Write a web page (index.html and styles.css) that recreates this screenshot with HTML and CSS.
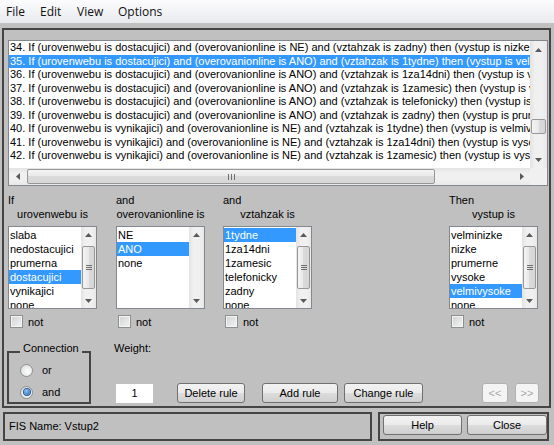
FILE: index.html
```html
<!DOCTYPE html>
<html>
<head>
<meta charset="utf-8">
<title>Rule Editor</title>
<link rel="stylesheet" href="styles.css">
</head>
<body>
<div class="win">
  <div class="menubar">
    <span>File</span><span>Edit</span><span>View</span><span>Options</span>
  </div>

  <div class="frame">
    <div class="rulebox">
      <div class="rules">
        <div class="rl">34. If (urovenwebu is dostacujici) and (overovanionline is NE) and (vztahzak is zadny) then (vystup is nizke) (1)</div>
        <div class="rl sel">35. If (urovenwebu is dostacujici) and (overovanionline is ANO) and (vztahzak is 1tydne) then (vystup is velmivysoke) (1)</div>
        <div class="rl">36. If (urovenwebu is dostacujici) and (overovanionline is ANO) and (vztahzak is 1za14dni) then (vystup is vysoke) (1)</div>
        <div class="rl">37. If (urovenwebu is dostacujici) and (overovanionline is ANO) and (vztahzak is 1zamesic) then (vystup is vysoke) (1)</div>
        <div class="rl">38. If (urovenwebu is dostacujici) and (overovanionline is ANO) and (vztahzak is telefonicky) then (vystup is prumerne) (1)</div>
        <div class="rl">39. If (urovenwebu is dostacujici) and (overovanionline is ANO) and (vztahzak is zadny) then (vystup is prumerne) (1)</div>
        <div class="rl">40. If (urovenwebu is vynikajici) and (overovanionline is NE) and (vztahzak is 1tydne) then (vystup is velmivysoke) (1)</div>
        <div class="rl">41. If (urovenwebu is vynikajici) and (overovanionline is NE) and (vztahzak is 1za14dni) then (vystup is vysoke) (1)</div>
        <div class="rl">42. If (urovenwebu is vynikajici) and (overovanionline is NE) and (vztahzak is 1zamesic) then (vystup is vysoke) (1)</div>
      </div>
      <div class="vsb big">
        <div class="arr"><svg width="7" height="4" viewBox="0 0 7 4"><polygon points="0,4 3.5,0 7,4" fill="#5a5a5a"/></svg></div>
        <div class="track"><div class="thumb bigthumb"></div></div>
        <div class="arr"><svg width="7" height="4" viewBox="0 0 7 4"><polygon points="0,0 7,0 3.5,4" fill="#5a5a5a"/></svg></div>
      </div>
      <div class="hsb">
        <div class="harr"><svg width="4" height="7" viewBox="0 0 4 7"><polygon points="4,0 4,7 0,3.5" fill="#5a5a5a"/></svg></div>
        <div class="htrack">
          <div class="hthumb">
            <svg width="7" height="6" viewBox="0 0 7 6"><path d="M0.5 0v6M3.5 0v6M6.5 0v6" stroke="#6e6e6e" stroke-width="1"/></svg>
          </div>
        </div>
        <div class="harr"><svg width="4" height="7" viewBox="0 0 4 7"><polygon points="0,0 4,3.5 0,7" fill="#5a5a5a"/></svg></div>
      </div>
      <div class="corner"></div>
    </div>

    <div class="cols">
      <div class="col">
        <div class="lab1">If</div>
        <div class="lab2">urovenwebu is</div>
        <div class="lb">
          <div class="items">
            <div>slaba</div><div>nedostacujici</div><div>prumerna</div><div class="sel">dostacujici</div><div>vynikajici</div><div>none</div>
          </div>
          <div class="vsb">
            <div class="arr sm"><svg width="7" height="4" viewBox="0 0 7 4"><polygon points="0,4 3.5,0 7,4" fill="#5a5a5a"/></svg></div>
            <div class="track"><div class="thumb smthumb"><svg width="6" height="5" viewBox="0 0 6 5"><path d="M0 0.5h6M0 2.5h6M0 4.5h6" stroke="#6e6e6e"/></svg></div></div>
            <div class="arr sm"><svg width="7" height="4" viewBox="0 0 7 4"><polygon points="0,0 7,0 3.5,4" fill="#5a5a5a"/></svg></div>
          </div>
        </div>
        <div class="chk"><span class="cbox"></span>not</div>
      </div>

      <div class="col c2">
        <div class="lab1">and</div>
        <div class="lab2">overovanionline is</div>
        <div class="lb">
          <div class="items">
            <div>NE</div><div class="sel">ANO</div><div>none</div>
          </div>
          <div class="vsb">
            <div class="arr sm"><svg width="7" height="4" viewBox="0 0 7 4"><polygon points="0,4 3.5,0 7,4" fill="#5a5a5a"/></svg></div>
            <div class="track"></div>
            <div class="arr sm"><svg width="7" height="4" viewBox="0 0 7 4"><polygon points="0,0 7,0 3.5,4" fill="#5a5a5a"/></svg></div>
          </div>
        </div>
        <div class="chk"><span class="cbox"></span>not</div>
      </div>

      <div class="col c3">
        <div class="lab1">and</div>
        <div class="lab2">vztahzak is</div>
        <div class="lb">
          <div class="items">
            <div class="sel">1tydne</div><div>1za14dni</div><div>1zamesic</div><div>telefonicky</div><div>zadny</div><div>none</div>
          </div>
          <div class="vsb">
            <div class="arr sm"><svg width="7" height="4" viewBox="0 0 7 4"><polygon points="0,4 3.5,0 7,4" fill="#5a5a5a"/></svg></div>
            <div class="track"><div class="thumb smthumb"><svg width="6" height="5" viewBox="0 0 6 5"><path d="M0 0.5h6M0 2.5h6M0 4.5h6" stroke="#6e6e6e"/></svg></div></div>
            <div class="arr sm"><svg width="7" height="4" viewBox="0 0 7 4"><polygon points="0,0 7,0 3.5,4" fill="#5a5a5a"/></svg></div>
          </div>
        </div>
        <div class="chk"><span class="cbox"></span>not</div>
      </div>

      <div class="col c4">
        <div class="lab1">Then</div>
        <div class="lab2">vystup is</div>
        <div class="lb">
          <div class="items">
            <div>velminizke</div><div>nizke</div><div>prumerne</div><div>vysoke</div><div class="sel">velmivysoke</div><div>none</div>
          </div>
          <div class="vsb">
            <div class="arr sm"><svg width="7" height="4" viewBox="0 0 7 4"><polygon points="0,4 3.5,0 7,4" fill="#5a5a5a"/></svg></div>
            <div class="track"><div class="thumb smthumb"><svg width="6" height="5" viewBox="0 0 6 5"><path d="M0 0.5h6M0 2.5h6M0 4.5h6" stroke="#6e6e6e"/></svg></div></div>
            <div class="arr sm"><svg width="7" height="4" viewBox="0 0 7 4"><polygon points="0,0 7,0 3.5,4" fill="#5a5a5a"/></svg></div>
          </div>
        </div>
        <div class="chk"><span class="cbox"></span>not</div>
      </div>
    </div>

    <div class="lower">
      <fieldset class="conn">
        <legend>Connection</legend>
        <div class="radios">
          <div class="radio"><span class="rbtn"></span>or</div>
          <div class="radio"><span class="rbtn on"></span>and</div>
        </div>
      </fieldset>
      <div class="weight">
        <div class="wlab">Weight:</div>
        <div class="winput">1</div>
      </div>
      <button class="btn b-del">Delete rule</button>
      <button class="btn b-add">Add rule</button>
      <button class="btn b-chg">Change rule</button>
      <button class="btn dis b-prev">&lt;&lt;</button>
      <button class="btn dis b-next">&gt;&gt;</button>
    </div>
  </div>

  <div class="bottom">
    <div class="fis">FIS Name: Vstup2</div>
    <div class="hc">
      <button class="btn b-help">Help</button>
      <button class="btn b-close">Close</button>
    </div>
  </div>
</div>
</body>
</html>
```

FILE: styles.css
```css
* { box-sizing: border-box; }

body {
  margin: 0;
  background: #c0c0c0;
  font-family: "Liberation Sans", Arial, sans-serif;
  font-size: 11px;
  color: #000;
}

.win {
  width: 554px;
  height: 445px;
  overflow: hidden;
  background: #c0c0c0;
}

/* menu */
.menubar {
  height: 23px;
  background: linear-gradient(#fcfcfd, #e8eaee);
  display: grid;
  grid-template-columns: 34px 37px 41px auto;
  align-items: center;
  padding-left: 6px;
  font-family: "Open Sans", "Liberation Sans", sans-serif;
  font-size: 12px;
  color: #111;
}

/* main frame */
.frame {
  margin: 5px 3px 0 2px;
  height: 380px;
  border: 2px solid #454545;
  padding: 10px 1px 0 4px;
}

.rulebox {
  width: 540px;
  height: 146px;
  border: 1px solid #828790;
  background: #fff;
  display: grid;
  grid-template-columns: 1fr 17px;
  grid-template-rows: 127px 17px;
}

.rules {
  overflow: hidden;
  white-space: nowrap;
  line-height: 13.5px;
}
.rl { padding-left: 1px; }
.rl.sel, .items .sel {
  background: #3399ff;
  color: #fff;
}

/* scrollbars */
.vsb {
  display: flex;
  flex-direction: column;
  background: linear-gradient(to right, #e3e3e3, #f0f0f0 30%, #f0f0f0 70%, #e8e8e8);
}
.arr {
  height: 17px;
  display: flex;
  align-items: center;
  justify-content: center;
  flex: none;
}
.arr.sm { height: 15px; }
.track { flex: 1; display: flex; flex-direction: column; }
.thumb {
  margin: 0 1px;
  border: 1px solid #979797;
  border-radius: 2px;
  background: linear-gradient(to right, #f4f4f4, #e8e8e8 50%, #dadada 50%, #d6d6d6);
  display: flex;
  align-items: center;
  justify-content: center;
}
.bigthumb { margin-top: 61px; height: 15px; }
.smthumb { margin-top: 4px; height: 43px; }

.hsb {
  display: flex;
  background: linear-gradient(#e3e3e3, #f0f0f0 30%, #f0f0f0 70%, #e8e8e8);
}
.harr {
  width: 17px;
  flex: none;
  display: flex;
  align-items: center;
  justify-content: center;
}
.htrack { flex: 1; display: flex; align-items: stretch; padding: 1px 0; }
.hthumb {
  margin-left: 1px;
  width: 408px;
  border: 1px solid #979797;
  border-radius: 2px;
  background: linear-gradient(#f4f4f4, #e8e8e8 50%, #dadada 50%, #d6d6d6);
  display: flex;
  align-items: center;
  justify-content: center;
}
.corner { background: #f0f0f0; }

/* antecedent columns */
.cols {
  display: flex;
  width: 530px;
  margin-top: 7px;
}
.col { width: 89px; flex: none; }
.c2 { margin-left: 19px; }
.c3 { margin-left: 18px; }
.c4 { margin-left: auto; }

.lab1 { line-height: 14px; height: 14px; }
.lab2 { line-height: 14px; height: 14px; text-align: center; margin-bottom: 5px; }

.lb {
  height: 83px;
  border: 1px solid #828790;
  background: #fff;
  display: flex;
}
.items {
  flex: 1;
  overflow: hidden;
  padding-top: 1px;
  line-height: 14px;
  white-space: nowrap;
}
.items div { padding-left: 1px; }
.lb .vsb { width: 15px; flex: none; }

.chk {
  margin-top: 6px;
  display: flex;
  align-items: center;
  height: 13px;
  padding-left: 2px;
}
.cbox {
  width: 13px;
  height: 13px;
  border: 1px solid #8e8f8f;
  background: linear-gradient(135deg, #cfd2d6, #f4f4f4);
  box-shadow: inset 0 0 0 1px #f4f4f4;
  margin-right: 5px;
}

/* lower area */
.lower {
  display: flex;
  align-items: flex-end;
  margin-top: 13px;
  height: 63px;
}
.conn {
  margin: 0 0 0 -1px;
  width: 84px;
  height: 63px;
  border: 2px solid #454545;
  padding: 0 0 0 11px;
  flex: none;
}
.conn legend {
  padding: 0 3px 8px 3px;
  line-height: 14px;
}
.radios { margin-top: -4px; }
.radio {
  height: 22px;
  display: flex;
  align-items: center;
}
.rbtn {
  width: 13px;
  height: 13px;
  border-radius: 50%;
  border: 1px solid #8e8f8f;
  background: radial-gradient(circle at 60% 60%, #ffffff, #d4d6d9);
  margin-right: 9px;
  display: flex;
  align-items: center;
  justify-content: center;
}
.rbtn.on::after {
  content: "";
  width: 6px;
  height: 6px;
  border-radius: 50%;
  background: radial-gradient(circle at 40% 35%, #8cc4f8, #1f5fa8);
  box-shadow: 0 0 0 1px #2b5c94;
}

.weight {
  align-self: stretch;
  margin-left: 23px;
  display: flex;
  flex-direction: column;
}
.wlab { line-height: 14px; }
.winput {
  margin-top: 29px;
  margin-left: 2px;
  width: 37px;
  height: 19px;
  background: #fff;
  text-align: center;
  line-height: 19px;
}

.btn {
  height: 20px;
  border: 1px solid #707070;
  border-radius: 3px;
  background: linear-gradient(#f2f2f2, #ebebeb 50%, #dddddd 50%, #cfcfcf);
  font-family: "Liberation Sans", Arial, sans-serif;
  font-size: 11px;
  color: #000;
  padding: 0;
  flex: none;
  margin-bottom: 1px;
}
.btn.dis {
  border-color: #adb2b5;
  background: #f4f4f4;
  color: #a8a8a8;
}
.b-del { width: 68px; margin-left: 24px; }
.b-add { width: 76px; margin-left: 17px; }
.b-chg { width: 79px; margin-left: 6px; }
.b-prev { width: 26px; margin-left: 59px; }
.b-next { width: 24px; margin-left: 7px; }

/* bottom */
.bottom {
  display: flex;
  margin-top: 4px;
  height: 29px;
}
.fis {
  margin-left: 3px;
  width: 369px;
  border: 2px solid #454545;
  padding-left: 4px;
  line-height: 25px;
}
.hc {
  margin-left: 6px;
  width: 171px;
  border: 2px solid #454545;
  display: flex;
  padding: 1px 0 0 3px;
}
.b-help { width: 79px; }
.b-close { width: 80px; margin-left: 5px; }
```
